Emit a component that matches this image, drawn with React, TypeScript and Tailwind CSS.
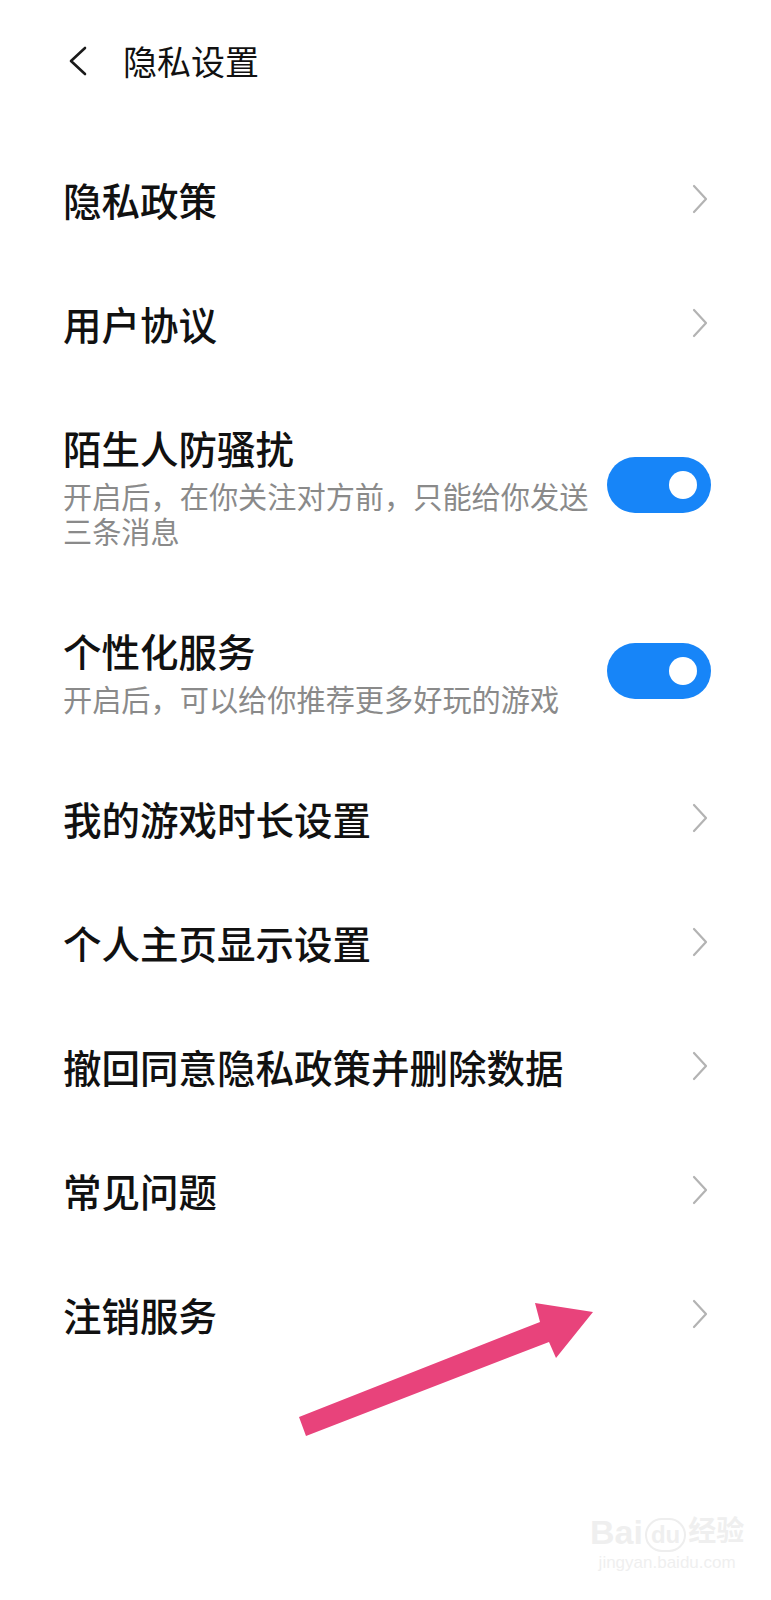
import React from 'react';

const font = { fontFamily: '"Noto Sans CJK SC", "Noto Sans", sans-serif' };

function Chevron() {
  return (
    <svg width="16" height="30" viewBox="0 0 16 30" fill="none">
      <path d="M2 2 L14 15 L2 28" stroke="#b3b3b3" strokeWidth="2.2" strokeLinecap="round" strokeLinejoin="round" />
    </svg>
  );
}

function Toggle() {
  return (
    <div className="w-[104px] h-[56px] rounded-full bg-[#1785f8] flex items-center justify-end shrink-0">
      <div className="w-[28px] h-[28px] rounded-full bg-white mr-[14px]" />
    </div>
  );
}

function LinkRow({ label }: { label: string }) {
  return (
    <div className="h-[124px] flex items-center justify-between pl-[63px] pr-[63px]">
      <span className="text-[38.5px] leading-[50px] font-medium text-[#111]">{label}</span>
      <Chevron />
    </div>
  );
}

function ToggleRow({ label, desc }: { label: string; desc: string }) {
  return (
    <div className="pt-[37px] pb-[40px] flex items-center justify-between pl-[63px] pr-[60px]">
      <div className="w-[532px]">
        <div className="text-[38.5px] leading-[50px] font-medium text-[#111]">{label}</div>
        <div className="mt-[6px] text-[29.2px] leading-[35px] text-[#8a8a8a]">{desc}</div>
      </div>
      <Toggle />
    </div>
  );
}

export default function App() {
  return (
    <div className="relative w-[771px] min-h-[1600px] bg-white overflow-hidden" style={font}>
      <header className="h-[122px] flex items-center pl-[69px]">
        <svg width="18" height="30" viewBox="0 0 18 30" fill="none">
          <path d="M16 2 L2 15 L16 28" stroke="#1a1a1a" strokeWidth="2.6" strokeLinecap="round" strokeLinejoin="round" />
        </svg>
        <h1 className="ml-[36px] text-[34px] leading-[44px] text-[#111]">隐私设置</h1>
      </header>

      <div className="pt-[15px]">
        <LinkRow label="隐私政策" />
        <LinkRow label="用户协议" />
        <ToggleRow label="陌生人防骚扰" desc="开启后，在你关注对方前，只能给你发送三条消息" />
        <ToggleRow label="个性化服务" desc="开启后，可以给你推荐更多好玩的游戏" />
        <LinkRow label="我的游戏时长设置" />
        <LinkRow label="个人主页显示设置" />
        <LinkRow label="撤回同意隐私政策并删除数据" />
        <LinkRow label="常见问题" />
        <LinkRow label="注销服务" />
      </div>

      {/* annotation arrow drawn over the screenshot */}
      <svg className="absolute left-0 top-0 pointer-events-none" width="771" height="1600" viewBox="0 0 771 1600">
        <polygon
          points="299,1417 540,1322 535,1303 593,1312 556,1358 549,1342 306,1436"
          fill="#e8437b"
        />
      </svg>

      {/* watermark */}
      <div className="absolute left-[590px] top-[1512px] flex flex-col items-center text-[#efefef]" style={{ fontFamily: '"Liberation Sans", "Noto Sans CJK SC", sans-serif' }}>
        <div className="flex items-end text-[34px] leading-[40px] font-bold">
          <span>Bai</span>
          <span className="mx-[2px] px-[4px] rounded-full border-[2px] border-[#eeeeee] text-[24px] leading-[30px]">du</span>
          <span className="text-[28px]">经验</span>
        </div>
        <div className="text-[17px] leading-[22px]">jingyan.baidu.com</div>
      </div>
    </div>
  );
}
